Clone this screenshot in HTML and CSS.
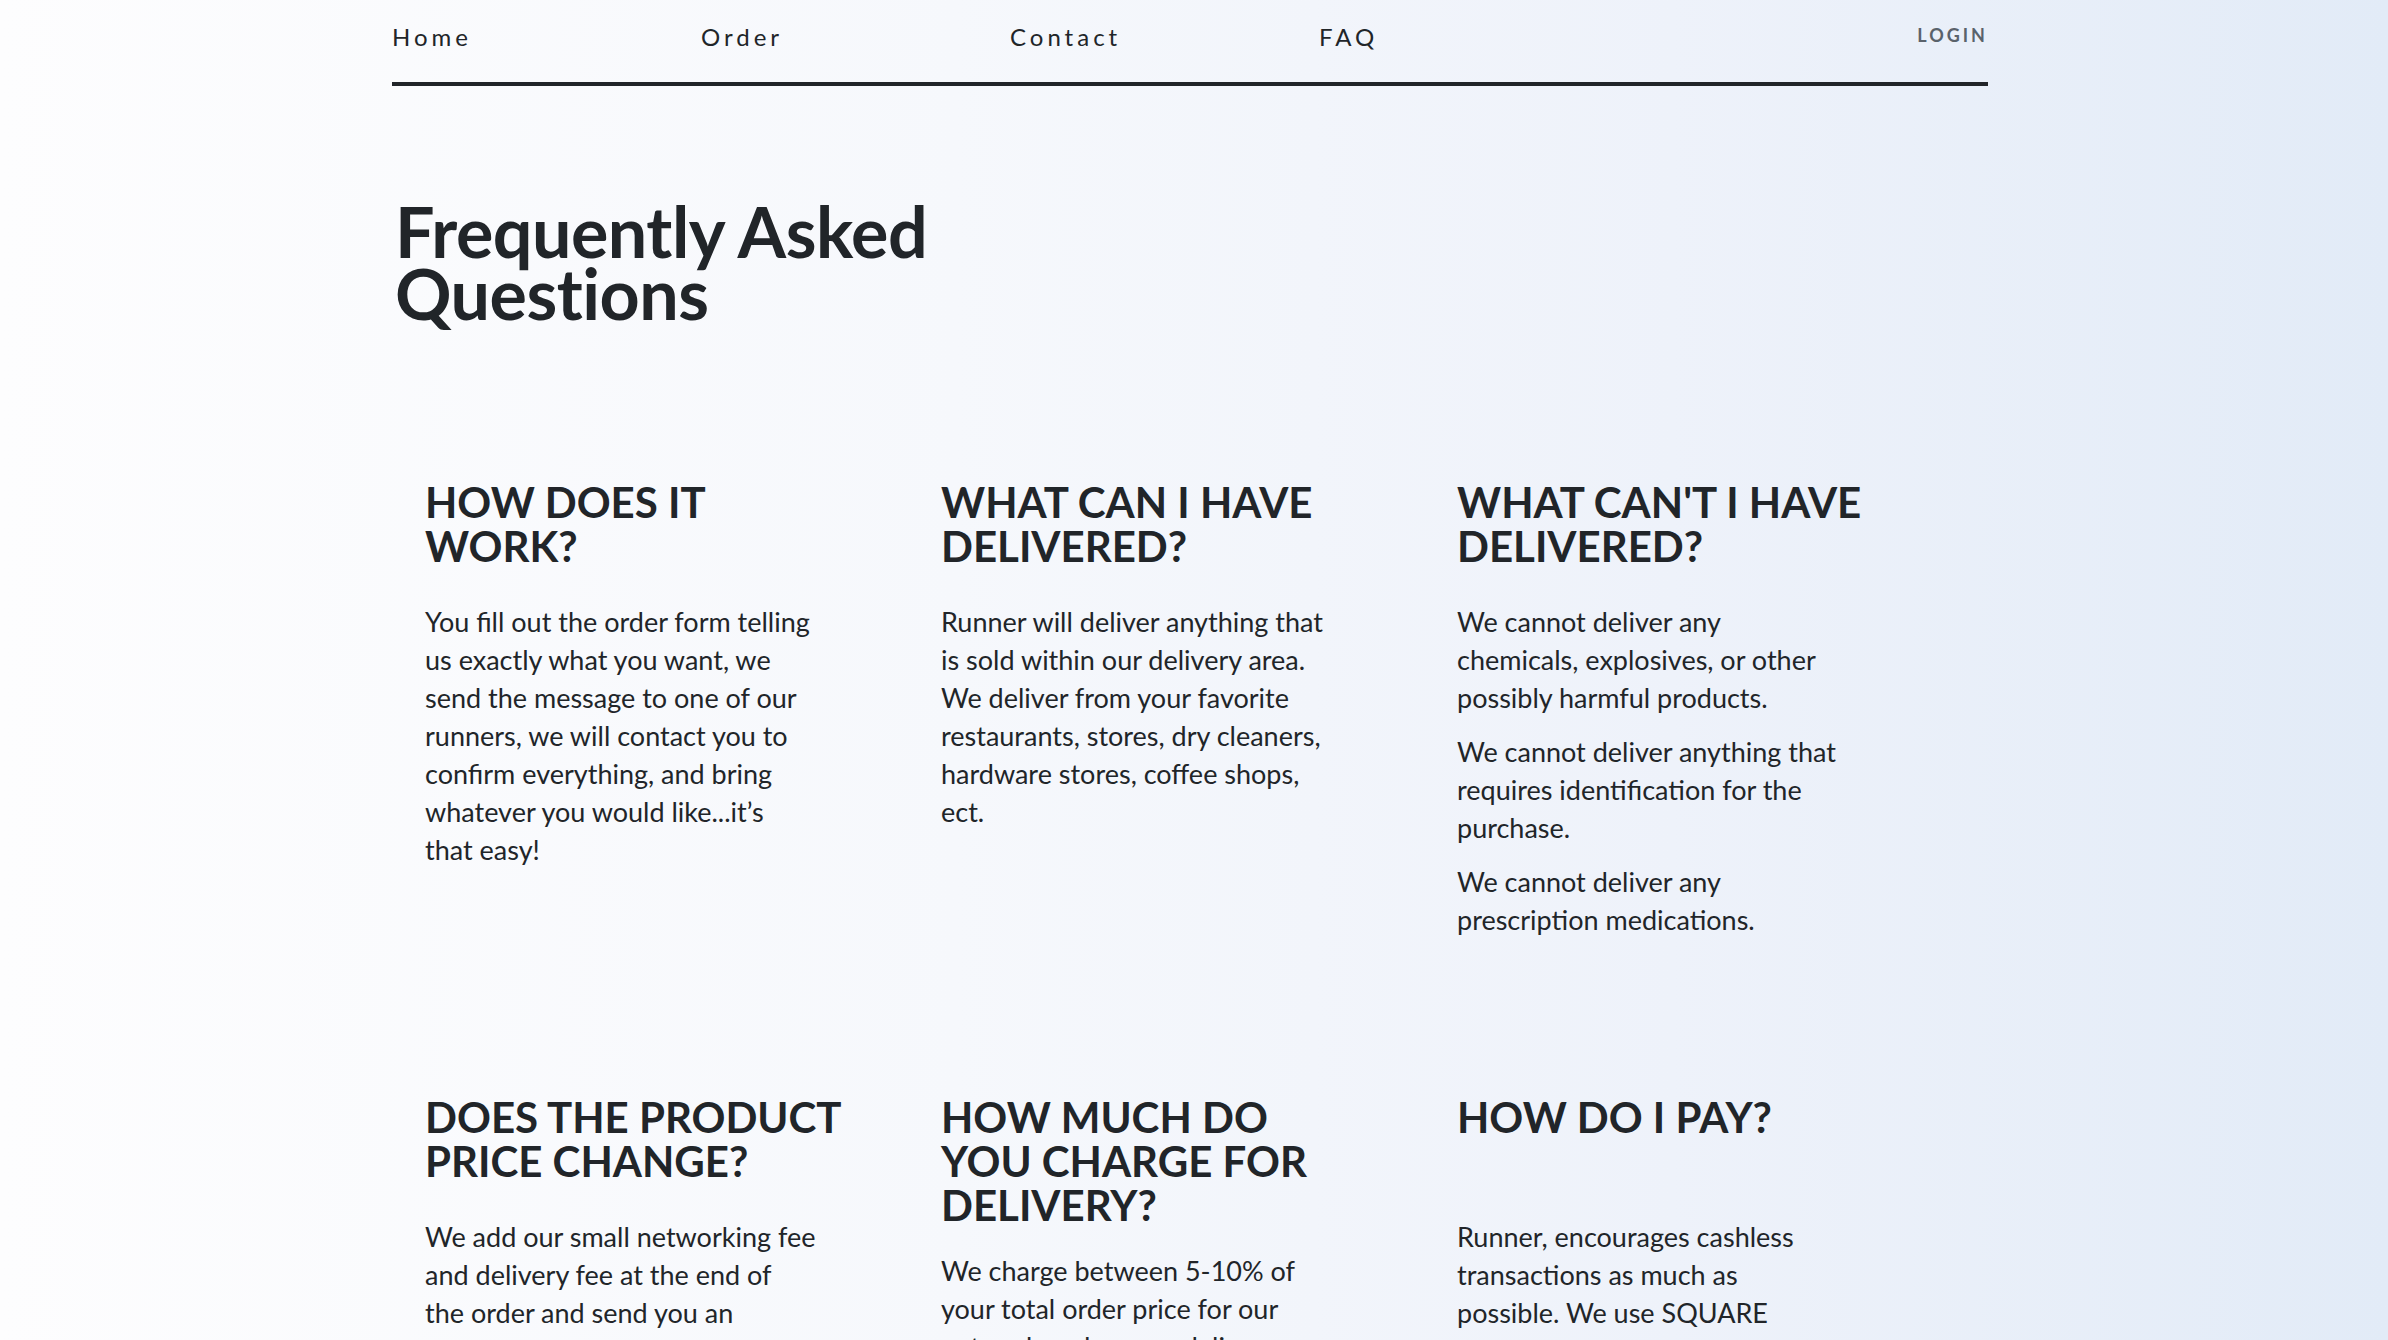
FILE: index.html
```html
<!DOCTYPE html>
<html lang="en">
<head>
<meta charset="utf-8">
<title>FAQ - Runner</title>
<link rel="stylesheet" href="styles.css">
</head>
<body>
<div class="page">
  <nav class="topnav">
    <a class="nav-link" href="#">Home</a>
    <a class="nav-link" href="#">Order</a>
    <a class="nav-link" href="#">Contact</a>
    <a class="nav-link" href="#">FAQ</a>
    <a class="login" href="#">LOGIN</a>
  </nav>

  <h1 class="page-title">Frequently Asked<br>Questions</h1>

  <section class="faq-row">
    <div class="faq-item">
      <h2 class="faq-q">HOW DOES IT<br>WORK?</h2>
      <p class="faq-a">You fill out the order form telling<br>us exactly what you want, we<br>send the message to one of our<br>runners, we will contact you to<br>confirm everything, and bring<br>whatever you would like...it’s<br>that easy!</p>
    </div>
    <div class="faq-item">
      <h2 class="faq-q">WHAT CAN I HAVE<br>DELIVERED?</h2>
      <p class="faq-a">Runner will deliver anything that<br>is sold within our delivery area.<br>We deliver from your favorite<br>restaurants, stores, dry cleaners,<br>hardware stores, coffee shops,<br>ect.</p>
    </div>
    <div class="faq-item">
      <h2 class="faq-q">WHAT CAN'T I HAVE<br>DELIVERED?</h2>
      <p class="faq-a">We cannot deliver any<br>chemicals, explosives, or other<br>possibly harmful products.</p>
      <p class="faq-a">We cannot deliver anything that<br>requires identification for the<br>purchase.</p>
      <p class="faq-a">We cannot deliver any<br>prescription medications.</p>
    </div>
  </section>

  <section class="faq-row">
    <div class="faq-item">
      <h2 class="faq-q">DOES THE PRODUCT<br>PRICE CHANGE?</h2>
      <p class="faq-a">We add our small networking fee<br>and delivery fee at the end of<br>the order and send you an<br>invoice with the final total.</p>
    </div>
    <div class="faq-item">
      <h2 class="faq-q">HOW MUCH DO<br>YOU CHARGE FOR<br>DELIVERY?</h2>
      <p class="faq-a">We charge between 5-10% of<br>your total order price for our<br>network and runner delivery.</p>
    </div>
    <div class="faq-item">
      <h2 class="faq-q">HOW DO I PAY?</h2>
      <p class="faq-a">Runner, encourages cashless<br>transactions as much as<br>possible. We use SQUARE<br>to accept all major cards.</p>
    </div>
  </section>
</div>
</body>
</html>
```

FILE: styles.css
```css
html, body {
  margin: 0;
  padding: 0;
}

body {
  min-height: 100vh;
  background: linear-gradient(90deg, #fdfdfe 0%, #f6f8fc 40%, #eef2fa 70%, #e2ebf7 100%);
  color: #212529;
  font-family: "Lato", "Liberation Sans", sans-serif;
}

.page {
  width: 1596px;
  margin-left: 392px;
}

.topnav {
  display: flex;
  align-items: baseline;
  height: 82px;
  border-bottom: 4px solid #212529;
  box-sizing: content-box;
}

.nav-link {
  flex: 0 0 309px;
  font-size: 24px;
  letter-spacing: 4px;
  color: #212529;
  text-decoration: none;
  line-height: 1;
  padding-top: 25px;
}

.login {
  margin-left: auto;
  font-size: 18px;
  font-weight: 700;
  letter-spacing: 3px;
  color: #5a626b;
  text-decoration: none;
  margin-right: 0;
  position: relative;
  top: -4px;
}

.page-title {
  margin: 114px 0 0;
  padding-left: 3px;
  font-size: 70px;
  line-height: 62px;
  font-weight: 700;
  letter-spacing: -0.5px;
}

.faq-row {
  display: grid;
  grid-template-columns: repeat(3, 516px);
  padding-top: 156px;
  margin-left: 33px;
}

.faq-q {
  margin: 0 0 25px;
  min-height: 98px;
  font-size: 42px;
  line-height: 44px;
  font-weight: 700;
}

.faq-a {
  margin: 0 0 16px;
  font-size: 27px;
  line-height: 38px;
  white-space: nowrap;
}

.faq-a:last-child {
  margin-bottom: 0;
}
```
